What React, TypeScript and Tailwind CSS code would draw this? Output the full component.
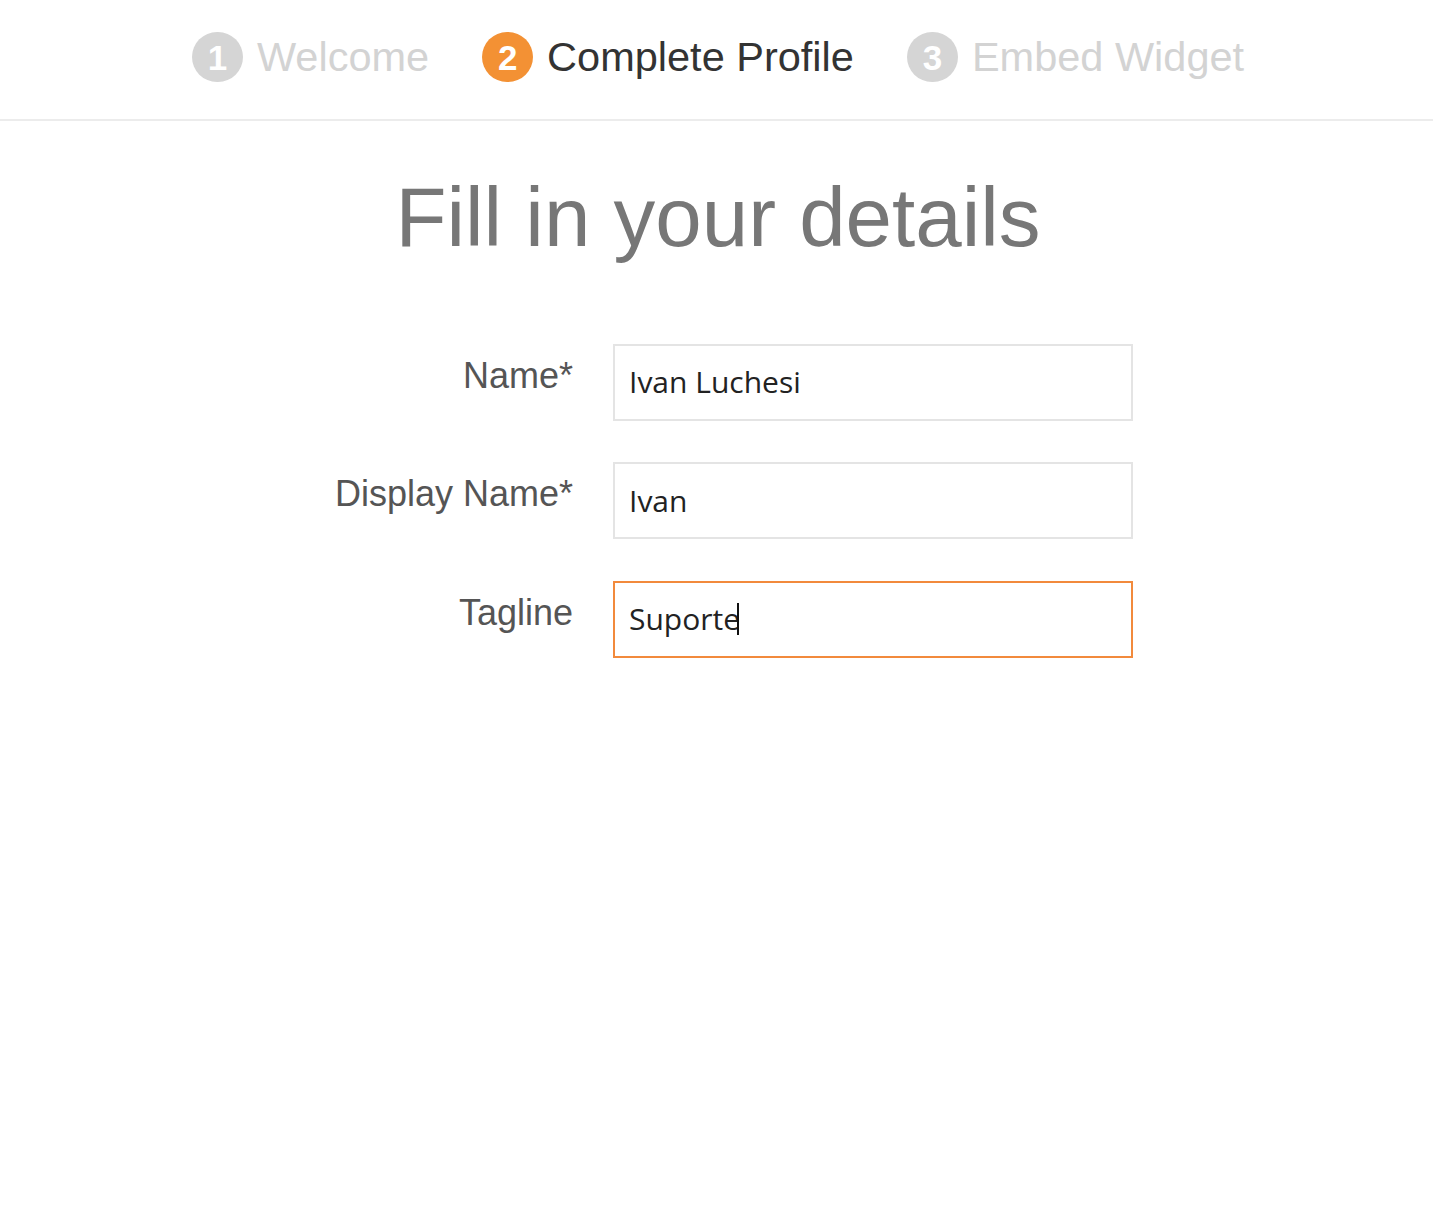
import React from "react";

const arial = { fontFamily: '"Liberation Sans", Arial, sans-serif' };

function Step({ n, label, active }: { n: number; label: string; active?: boolean }) {
  return (
    <div className="flex items-center gap-[14px]">
      <div
        className={`flex h-[50px] w-[51px] items-center justify-center rounded-full text-[35px] font-bold leading-none text-white ${
          active ? "bg-[#f39134]" : "bg-[#d5d5d5]"
        }`}
      >
        {n}
      </div>
      <span className={`text-[41.5px] leading-none ${active ? "text-[#333333]" : "text-[#d3d3d3]"}`}>{label}</span>
    </div>
  );
}

function Field({ label, value, focused }: { label: string; value: string; focused?: boolean }) {
  return (
    <>
      <div className="pt-[14px] text-right text-[36px] leading-none text-[#555555]">{label}</div>
      <div
        className={`flex h-[77px] items-center border-2 bg-white pl-[14px] text-[30px] leading-none text-[#222222] ${
          focused ? "border-[#f28a3c]" : "border-[#e4e4e4]"
        }`}
        style={{ fontFamily: '"Open Sans", "Noto Sans", sans-serif' }}
      >
        <span>{value}</span>
        {focused && <span className="ml-[-3px] inline-block h-[32px] w-[2px] bg-[#111111]" />}
      </div>
    </>
  );
}

export default function App() {
  return (
    <div className="min-h-[1209px] w-full bg-white" style={arial}>
      <header className="flex h-[121px] items-center justify-center gap-[53px] border-b-2 border-[#ececec] pb-[5px] pl-[3px]">
        <Step n={1} label="Welcome" />
        <Step n={2} label="Complete Profile" active />
        <Step n={3} label="Embed Widget" />
      </header>
      <h1 className="mt-[55px] pl-[3px] text-center text-[83.5px] leading-none text-[#777777]">Fill in your details</h1>
      <div className="mx-auto mt-[84px] grid w-[833px] grid-cols-[273px_520px] gap-x-[40px] gap-y-[41.5px]">
        <Field label="Name*" value="Ivan Luchesi" />
        <Field label="Display Name*" value="Ivan" />
        <Field label="Tagline" value="Suporte" focused />
      </div>
    </div>
  );
}
